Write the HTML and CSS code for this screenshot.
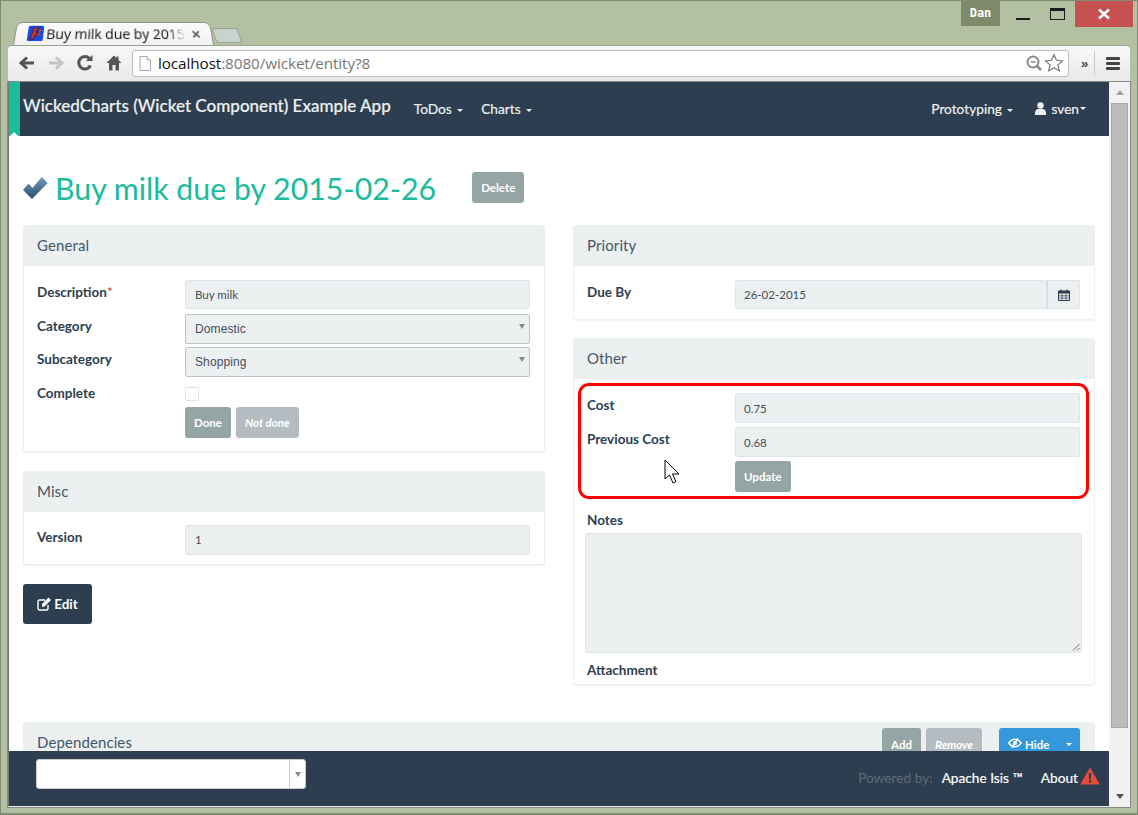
FILE: index.html
```html
<!DOCTYPE html>
<html lang="en">
<head>
<meta charset="utf-8">
<title>Buy milk due by 2015-02-26</title>
<link rel="stylesheet" href="styles.css">
</head>
<body>
<div class="window">
  <div class="titlebar">
    <div class="tabstrip">
      <div class="tab">
        <svg class="favicon" width="16" height="16" viewBox="0 0 16 16"><rect width="16" height="16" rx="1.5" fill="#1c49e0"/><path d="M3 14 6 2h4.500L10 5H8.400L8 7h1.800l-.6 3H7.400l-1 4z" fill="#e8391d" stroke="#111" stroke-width=".7"/><rect x="11" y="4" width="2.400" height="2.200" fill="#e8391d"/><rect x="10.300" y="8" width="2.400" height="2.200" fill="#e8391d"/></svg>
        <span class="tab-title">Buy milk due by 2015</span>
        <span class="tab-close">×</span>
      </div>
      <div class="newtab"></div>
    </div>
    <div class="winctl">
      <div class="user-badge">Dan</div>
      <div class="winbtn"><span class="win-min"></span></div>
      <div class="winbtn"><span class="win-max"></span></div>
      <div class="win-close">
        <svg width="12" height="12" viewBox="0 0 12 12"><path d="M1 1.500 11 10.500M11 1.500 1 10.500" stroke="#fff" stroke-width="2.600"/></svg>
      </div>
    </div>
  </div>
  <div class="toolbar">
    <svg class="tool" width="20" height="20" viewBox="0 0 20 20"><path d="M17 10H6M10 4.500 4 10l6 5.500" fill="none" stroke="#555" stroke-width="3"/></svg>
    <svg class="tool" width="20" height="20" viewBox="0 0 20 20"><path d="M3 10h11M10 4.500 16 10l-6 5.500" fill="none" stroke="#c4c4c4" stroke-width="3"/></svg>
    <svg class="tool" width="20" height="20" viewBox="0 0 20 20"><path d="M15.500 12.500A6.200 6.200 0 1 1 14.500 5.500" fill="none" stroke="#555" stroke-width="3"/><path d="M11 8h6.500V2z" fill="#555"/></svg>
    <svg class="tool" width="20" height="20" viewBox="0 0 20 20"><path d="M10 2.500 2.500 10H5v7.500h3.500V12h3v5.500H15V10h2.500L14.500 7V3.500h-2v1.500z" fill="#555"/></svg>
    <div class="omnibox">
      <svg width="12" height="15" viewBox="0 0 12 15"><path d="M1 .5h7l3.500 3.500v10.500H1z" fill="#fff" stroke="#aaa"/><path d="M8 .5V4h3.500" fill="#eee" stroke="#aaa"/></svg>
      <span class="url"><span class="url-host">localhost</span>:8080/wicket/entity?8</span>
      <svg width="18" height="18" viewBox="0 0 18 18"><circle cx="8" cy="8" r="5.500" fill="none" stroke="#888" stroke-width="2"/><path d="M5.500 8h5" stroke="#888" stroke-width="1.500"/><path d="M12 12l4 4" stroke="#888" stroke-width="2.500"/></svg>
      <svg width="20" height="20" viewBox="0 0 20 20"><path d="M10 1.800l2.500 5.500 6 .6-4.500 4 1.300 6L10 14.800l-5.300 3.100 1.300-6-4.500-4 6-.6z" fill="#fff" stroke="#777" stroke-width="1.200"/></svg>
    </div>
    <span class="more">»</span>
    <span class="tool-sep"></span>
    <div class="menu-icon"><span></span><span></span><span></span></div>
  </div>
  <div class="viewport">
    <div class="page">
      <nav class="navbar">
        <div class="ribbon"></div>
        <a class="brand">WickedCharts (Wicket Component) Example App</a>
        <a class="navlink">ToDos <i class="caret"></i></a>
        <a class="navlink">Charts <i class="caret"></i></a>
        <span class="nav-spacer"></span>
        <a class="navlink">Prototyping <i class="caret"></i></a>
        <a class="navlink navlink-user">
          <svg width="13" height="13" viewBox="0 0 13 13"><circle cx="6.500" cy="3.500" r="3.200" fill="#ecf0f1"/><path d="M.8 13c0-4 1.200-6 3.200-6h5c2 0 3.200 2 3.200 6z" fill="#ecf0f1"/></svg>
          sven<i class="caret caret-tight"></i>
        </a>
      </nav>
      <main class="content">
        <div class="title-row">
          <svg class="title-check" width="26" height="25" viewBox="0 0 26 25"><defs><linearGradient id="chk" x1="0" y1="0" x2="0" y2="1"><stop offset="0" stop-color="#6f9cc0"/><stop offset="1" stop-color="#2c4f6c"/></linearGradient></defs><path d="M1 15 6.500 8.500 10.500 13 19.700 2 25.700 8 10 24z" fill="url(#chk)"/></svg>
          <h1>Buy milk due by 2015-02-26</h1>
          <button class="btn btn-grey btn-delete">Delete</button>
        </div>
        <div class="columns">
          <div class="col">
            <section class="panel panel-general">
              <h2 class="panel-head">General</h2>
              <div class="panel-body">
                <div class="row row-a"><label>Description<span class="req">*</span></label><div class="input">Buy milk</div></div>
                <div class="row row-b"><label>Category</label><div class="input select">Domestic<i class="sel-arrow"></i></div></div>
                <div class="row row-c"><label>Subcategory</label><div class="input select">Shopping<i class="sel-arrow"></i></div></div>
                <div class="row row-d"><label>Complete</label><div class="check"></div></div>
                <div class="row row-e"><span></span><div class="btns"><button class="btn btn-grey">Done</button><button class="btn btn-light"><em>Not done</em></button></div></div>
              </div>
            </section>
            <section class="panel panel-misc">
              <h2 class="panel-head">Misc</h2>
              <div class="panel-body">
                <div class="row row-a"><label>Version</label><div class="input">1</div></div>
              </div>
            </section>
            <button class="btn-edit">
              <svg width="15" height="14" viewBox="0 0 15 14"><path d="M11 8v3.500a1.500 1.500 0 0 1-1.500 1.500h-7A1.500 1.500 0 0 1 1 11.500v-7A1.500 1.500 0 0 1 2.500 3H8" fill="none" stroke="#fff" stroke-width="1.400"/><path d="M5 7l6.500-6.500 2.500 2.500L7.500 9.500 5 10z" fill="#fff"/></svg>
              Edit
            </button>
          </div>
          <div class="col">
            <section class="panel panel-priority">
              <h2 class="panel-head">Priority</h2>
              <div class="panel-body">
                <div class="row row-a"><label>Due By</label><div class="input-group"><div class="input">26-02-2015</div><div class="addon"><svg width="12" height="12" viewBox="0 0 12 12"><path d="M.5 2h11v9.500H.5z" fill="none" stroke="#2c3e50"/><path d="M.5 2h11v2.500H.5z" fill="#2c3e50"/><path d="M3 .5v2M9 .5v2" stroke="#2c3e50" stroke-width="1.200"/><path d="M4 4.500v7M8 4.500v7M.5 6.800h11M.5 9.100h11" stroke="#2c3e50" stroke-width=".7"/></svg></div></div></div>
              </div>
            </section>
            <section class="panel panel-other">
              <h2 class="panel-head">Other</h2>
              <div class="panel-body">
                <div class="row row-a"><label>Cost</label><div class="input">0.75</div></div>
                <div class="row row-f"><label>Previous Cost</label><div class="input">0.68</div></div>
                <div class="row row-f"><span></span><div class="btns"><button class="btn btn-grey">Update</button></div></div>
                <label class="notes-label">Notes</label>
                <div class="textarea"><svg class="grip" width="8" height="8" viewBox="0 0 8 8"><path d="M7.500 1 1 7.500M7.500 5 5 7.500" stroke="#777"/></svg></div>
                <label class="attach-label">Attachment</label>
              </div>
              <div class="highlight"></div>
              <svg class="cursor" width="17" height="26" viewBox="0 0 17 26"><path d="M1 1v19l4.500-4 3.500 8 3-1.500-3.500-7.500H15z" fill="#fff" stroke="#000"/></svg>
            </section>
          </div>
        </div>
        <section class="panel panel-deps">
          <div class="panel-head deps-head">
            <h2>Dependencies</h2>
            <div class="deps-actions">
              <button class="btn btn-grey btn-add">Add</button>
              <button class="btn btn-light btn-remove"><em>Remove</em></button>
              <button class="btn-hide">
                <svg width="14" height="10" viewBox="0 0 17 12"><path d="M1 6c2-3 4.500-4.500 7.500-4.500S14 3 16 6c-2 3-4.500 4.500-7.500 4.500S3 9 1 6z" fill="none" stroke="#fff" stroke-width="1.800"/><circle cx="8.500" cy="6" r="2.500" fill="#fff"/><path d="M5 11.500 12 .5" stroke="#fff" stroke-width="1.800"/></svg>
                Hide<i class="caret caret-hide"></i>
              </button>
            </div>
          </div>
        </section>
      </main>
      <footer class="footer">
        <div class="foot-select"><span class="foot-select-arrow"><i class="sel-arrow sel-arrow-foot"></i></span></div>
        <span class="nav-spacer"></span>
        <span class="powered">Powered by:</span>
        <a class="foot-link foot-isis">Apache Isis ™</a>
        <a class="foot-link">About</a>
        <svg class="warn" width="20" height="18" viewBox="0 0 20 18"><path d="M10 .5 19.800 17.500H.2z" fill="#e74c3c"/><path d="M8.800 6h2.400l-.3 6.500H9.100z" fill="#2c3e50"/><rect x="8.900" y="13.500" width="2.200" height="2.200" fill="#2c3e50"/></svg>
      </footer>
    </div>
    <div class="scrollbar">
      <i class="sb-up"></i>
      <div class="sb-thumb"></div>
      <span class="nav-spacer"></span>
      <i class="sb-down"></i>
    </div>
  </div>
</div>
</body>
</html>
```
FILE: styles.css
```css
* { box-sizing: border-box; }
html, body { margin: 0; height: 100%; overflow: hidden; }
body { font-family: "Lato", sans-serif; color: #2c3e50; background: #b4c0a2; }

.window {
  height: 815px;
  display: flex;
  flex-direction: column;
  padding: 0 7px 6px 8px;
  border: 1px solid #7f8b72;
  border-bottom-width: 2px;
  border-top-width: 1px;
  background: #b4c0a2;
}
.window > * { margin-left: -1px; }

.titlebar { height: 44px; display: flex; justify-content: space-between; flex: none; }
.tabstrip { display: flex; align-items: flex-end; padding-left: 5px; }
.tab {
  width: 201px;
  height: 24px;
  background: linear-gradient(#fbfbfb, #f2f2f2);
  border: 1px solid #8c9680;
  border-bottom: 0;
  border-radius: 6px 6px 0 0;
  transform: perspective(60px) rotateX(6deg);
  transform-origin: bottom;
  display: flex;
  align-items: center;
  padding: 0 11px 1px 12px;
  font: 14px "Open Sans", sans-serif;
  color: #111;
}
.favicon { flex: none; margin-right: 3px; }
.tab-title {
  flex: 1;
  overflow: hidden;
  white-space: nowrap;
  font-size: 14.400px;
  letter-spacing: -.1px;
  -webkit-mask-image: linear-gradient(90deg, #000 88%, transparent);
  mask-image: linear-gradient(90deg, #000 88%, transparent);
}
.tab-close { flex: none; font: bold 15px "Liberation Sans", sans-serif; color: #555; margin-left: 6px; }
.newtab {
  width: 26px; height: 15px; margin: 0 0 2px 0;
  background: #c9d3cd;
  border: 1px solid #93a08b;
  border-radius: 3px;
  transform: skewX(20deg);
}
.winctl { display: flex; align-items: flex-start; margin-right: -3px; }
.user-badge {
  width: 39px; height: 25px;
  background: #7f8a6d;
  color: #fff;
  font: bold 12px "DejaVu Sans Mono", monospace;
  text-align: center;
  line-height: 25px;
  margin-right: 5px;
}
.winbtn { width: 35px; height: 26px; display: flex; align-items: center; justify-content: center; }
.win-min { display: block; width: 14px; height: 2px; background: #1c1c1c; margin-top: 10px; }
.win-max { display: block; width: 15px; height: 12px; border: 1px solid #1c1c1c; border-top-width: 3px; margin-top: -1px; }
.win-close {
  width: 58px; height: 26px;
  background: #c75050;
  display: flex; align-items: center; justify-content: center;
}

.toolbar {
  height: 37px;
  flex: none;
  background: linear-gradient(#f8f8f8, #e9e9e9);
  border-top: 1px solid #9aa58f;
  border-radius: 4px 4px 0 0;
  display: flex;
  align-items: center;
  padding: 0 6px 1px 9px;
  border-bottom: 1px solid #a8a8a8;
}
.tool { margin-right: 9px; flex: none; }
.omnibox {
  flex: 1;
  height: 27px;
  margin-left: -1px;
  background: #fff;
  border: 1px solid #bdbdbd;
  border-radius: 3px;
  display: flex;
  align-items: center;
  padding: 0 4px 0 6px;
  gap: 1px;
}
.url { flex: 1; font: 15.300px "Open Sans", sans-serif; color: #777; margin-left: 6px; white-space: nowrap; letter-spacing: -.1px; }
.url-host { color: #111; }
.more { width: 12px; margin-left: 12px; font: bold 13px "Liberation Sans", sans-serif; color: #444; }
.tool-sep { width: 1px; height: 24px; background: #c8c8c8; margin: 0 11px 0 1px; }
.menu-icon { width: 14px; display: flex; flex-direction: column; gap: 2px; margin-right: 4px; }
.menu-icon span { height: 3px; background: #444; border-radius: 1px; }

.viewport {
  flex: 1;
  min-height: 0;
  display: flex;
  background: #fff;
  border-left: 1px solid #777;
  border-bottom: 1px solid #eee;
  outline: 1px solid #888;
}
.page { flex: 1; min-width: 0; position: relative; overflow: hidden; }

.navbar {
  height: 54px;
  background: #2c3e50;
  display: flex;
  align-items: center;
  position: relative;
  padding-left: 14px;
  color: #ecf0f1;
}
.ribbon {
  position: absolute; left: 0; top: 0; width: 11px; height: 54px;
  background: #1abc9c;
}
.ribbon::after {
  content: ""; position: absolute; left: 1px; bottom: 0;
  border: 4.500px solid transparent;
  border-bottom-color: #fff;
  border-top-width: 0;
}
.brand { font-size: 17.050px; font-weight: 500; margin-right: 23px; margin-top: -7px; color: #ecf0f1; white-space: nowrap; -webkit-text-stroke: .2px #ecf0f1; }
.navlink { font-size: 13.700px; margin-right: 18px; margin-top: -2px; color: #ecf0f1; white-space: nowrap; -webkit-text-stroke: .2px #ecf0f1; }
.navlink-user { margin-right: 23px; margin-left: 3px; display: flex; align-items: center; gap: 4px; }
.nav-spacer { flex: 1; }
.caret {
  display: inline-block;
  border: 3px solid transparent;
  border-top-color: currentColor;
  border-bottom-width: 0;
  vertical-align: middle;
  margin-left: 2px;
}
.caret-tight { margin-left: -3px; }

.content { padding: 0 14px; }
.title-row { display: flex; align-items: center; height: 89px; padding-top: 15px; }
.title-check { margin: -2px 7px 0 -1px; flex: none; }
h1 { margin: 0 36px 0 0; font-size: 30.300px; font-weight: 400; color: #1abc9c; white-space: nowrap; }
.btn-delete { margin-top: -2px; }

.btn {
  font-family: "Lato", sans-serif;
  font-size: 11.500px;
  font-weight: 700;
  color: #fff;
  border: 0;
  border-radius: 3px;
  padding: 0 9px;
  height: 31px;
}
.btn em { font-style: italic; }
.btn-grey { background: #95a5a6; }
.btn-light { background: #b4bcc2; }

.columns { display: grid; grid-template-columns: 522px 522px; gap: 28px; }
.col { display: flex; flex-direction: column; align-items: flex-start; }

.panel {
  width: 100%;
  background: #fff;
  border: 1px solid #ecf0f1;
  border-radius: 3px;
  box-shadow: 0 1px 1px rgba(0,0,0,.05);
  position: relative;
}
.panel-head {
  margin: 0;
  height: 40px;
  background: #ecf0f1;
  padding: 0 13px;
  font-size: 15px;
  font-weight: 400;
  line-height: 38px;
  color: #44576a;
  letter-spacing: .1px;
}
.panel-body { padding: 14px 14px 10px 13px; }
.panel-general { height: 227px; margin-bottom: 19px; }
.panel-general .input { padding-left: 9px; }
.panel-misc { height: 94px; margin-bottom: 19px; }
.panel-misc .input { padding-left: 9px; height: 30px; }
.panel-misc .panel-body { padding-top: 13px; }
.panel-priority { height: 95px; margin-bottom: 18px; }
.panel-other { height: 347px; }
.panel-other .row .input { height: 30px; line-height: 29px; }

.row { display: grid; grid-template-columns: 148px 1fr; }
.row label { font-size: 13.500px; font-weight: 700; padding-top: 4px; color: #2c3e50; }
.row-b { margin-top: 5px; }
.row-c { margin-top: 3px; }
.row-c .select { height: 30px; }
.row-d { margin-top: 10px; }
.row-e { margin-top: 6px; }
.row-f { margin-top: 4px; }
.req { color: #c0392b; font-weight: 400; }
.row-d label { margin-top: -6px; }

.input {
  height: 29px;
  background: #ecf0f1;
  border: 1px solid #dce4ec;
  border-radius: 2px;
  padding: 0 8px;
  font-size: 11.500px;
  line-height: 28px;
  color: #444f59;
}
.select {
  height: 29.500px;
  border-color: #bdc3c7;
  border-width: 1px;
  font: 12px/28px "Liberation Sans", sans-serif;
  padding-left: 9px;
  position: relative;
  letter-spacing: .1px;
}
.sel-arrow {
  position: absolute; right: 4px; top: 9px;
  border: 3.500px solid transparent;
  border-top: 5px solid #888;
  border-bottom: 0;
}
.check { width: 14px; height: 14px; background: #fff; border: 1px solid #dce4ec; border-radius: 2px; }
.btns { display: flex; gap: 5px; }
.input-group { display: flex; }
.input-group .input { flex: 1; border-radius: 2px 0 0 2px; }
.addon { width: 33px; height: 29px; background: #ecf0f1; border: 1px solid #dce4ec; border-left: 1px solid #cfd8df; border-radius: 0 2px 2px 0; display: flex; align-items: center; justify-content: center; }

.panel-other .panel-body { padding-bottom: 0; }
.notes-label, .attach-label { display: block; font-size: 13.500px; font-weight: 700; color: #2c3e50; }
.notes-label { margin-top: 20px; height: 21px; }
.attach-label { margin-top: 9px; }
.textarea {
  height: 120px;
  width: 497px;
  margin-left: -2px;
  background: #ecf0f1;
  border: 1px solid #dce4ec;
  border-radius: 2px;
  position: relative;
}
.grip { position: absolute; right: 1px; bottom: 1px; }
.highlight {
  position: absolute; left: 4px; top: 44px;
  width: 511px; height: 116px;
  border: 3px solid #f00;
  border-radius: 11px;
}
.cursor { position: absolute; left: 90px; top: 120px; }

.btn-edit {
  width: 69px; height: 40px;
  background: #2c3e50;
  border: 0;
  border-radius: 3px;
  color: #fff;
  font: 700 13.500px "Lato", sans-serif;
  display: flex; align-items: center; justify-content: center; gap: 2px;
  padding: 0;
}

.panel-deps { margin-top: 37px; height: 80px; }
.deps-head { display: flex; height: 80px; align-items: flex-start; justify-content: space-between; padding-right: 14px; }
.deps-head h2 { margin: 0; font: 400 15px/38px "Lato", sans-serif; color: #44576a; }
.deps-actions { display: flex; padding-top: 4px; }
.btn-add { width: 39px; padding: 2px 0 0; margin-top: 1px; }
.btn-remove { width: 56px; padding: 2px 0 0; margin: 1px 17px 0 5px; }
.btn-hide {
  width: 81px; height: 33px;
  margin-top: 1px;
  background: #3498db; color: #fff;
  border: 0; border-radius: 3px;
  font: 700 11.500px "Lato", sans-serif;
  display: flex; align-items: flex-start; padding: 10px 0 0 9px; gap: 3px;
}
.caret-hide { margin: 5px 0 0 14px; border-width: 3px; border-bottom-width: 0; }

.footer {
  position: absolute; left: 0; right: 0; bottom: 0;
  height: 55px;
  background: #2c3e50;
  display: flex;
  align-items: center;
  padding: 0 9px 2px 27px;
  color: #fff;
}
.foot-select {
  width: 270px; height: 30px;
  background: #fff;
  border-radius: 3px;
  border: 1px solid #ccc;
  position: relative;
  align-self: flex-start;
  margin-top: 8px;
}
.foot-select-arrow { position: absolute; right: 0; top: 0; bottom: 0; width: 16px; border-left: 1px solid #ccc; }
.sel-arrow-foot { right: 4px; top: 12px; }
.powered { color: #5f6c78; font-size: 13.700px; margin-right: 9px; }
.foot-link { font-size: 13.700px; color: #fff; white-space: nowrap; -webkit-text-stroke: .2px #fff; }
.foot-isis { margin-right: 18px; }
.warn { margin: -3px 0 0 2px; }

.scrollbar {
  width: 21px;
  flex: none;
  background: #f1f1f1;
  display: flex;
  flex-direction: column;
  align-items: center;
  padding: 8px 0 7px;
}
.sb-up { border: 4px solid transparent; border-bottom: 5px solid #a0a0a0; border-top: 0; }
.sb-down { border: 4px solid transparent; border-top: 5px solid #505050; border-bottom: 0; }
.sb-thumb { width: 17px; height: 625px; margin-top: 8px; background: #bcbcbc; border: 1px solid #a8a8a8; }
```
